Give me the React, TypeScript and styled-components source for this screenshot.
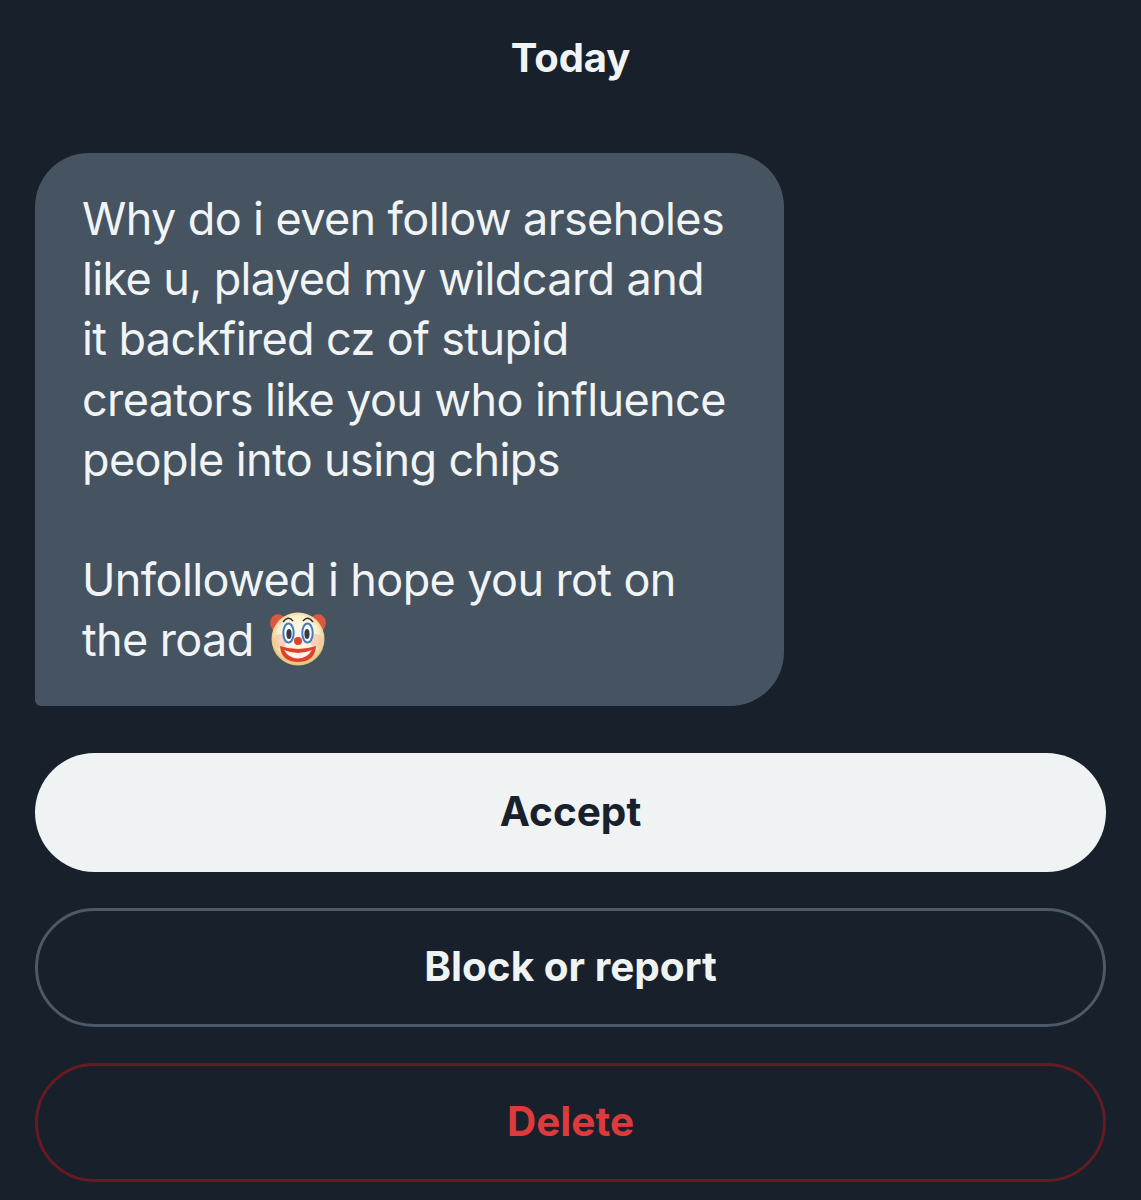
import React from 'react';
import styled, { createGlobalStyle } from 'styled-components';

const GlobalStyle = createGlobalStyle`
  html, body {
    margin: 0;
    padding: 0;
    background: #18202b;
  }
`;

const Screen = styled.div`
  width: 1141px;
  height: 1200px;
  overflow: hidden;
  box-sizing: border-box;
  padding: 0 35px;
  background: #18202b;
  font-family: 'Inter', 'Liberation Sans', sans-serif;
  display: flex;
  flex-direction: column;
`;

const DateLabel = styled.div`
  margin-top: 34px;
  height: 48px;
  line-height: 48px;
  text-align: center;
  color: #f1f4f5;
  font-size: 40px;
  font-weight: 700;
  letter-spacing: -0.1px;
`;

const Bubble = styled.div`
  margin-top: 71px;
  width: 749px;
  height: 553px;
  box-sizing: border-box;
  padding: 36px 47px 0;
  background: #465361;
  border-radius: 54px 54px 54px 6px;
  color: #f1f4f5;
  font-size: 45px;
  line-height: 60.2px;
  letter-spacing: -0.62px;
`;

const Line = styled.div`
  white-space: nowrap;
  min-height: 60.2px;
`;

const Actions = styled.div`
  margin-top: 47px;
  display: flex;
  flex-direction: column;
  gap: 36px;
`;

const Action = styled.button<{ $kind: 'accept' | 'neutral' | 'danger' }>`
  height: 119px;
  box-sizing: border-box;
  border-radius: 60px;
  font-family: inherit;
  font-size: 40.5px;
  font-weight: 700;
  padding: 0 0 2px;
  background: ${p => (p.$kind === 'accept' ? '#eff3f4' : 'transparent')};
  color: ${p => (p.$kind === 'accept' ? '#18202b' : p.$kind === 'danger' ? '#dd3a3d' : '#eff3f4')};
  border: ${p =>
    p.$kind === 'accept' ? 'none' : p.$kind === 'danger' ? '3px solid #661a22' : '3px solid #4c5966'};
`;

const ClownIcon = styled.svg`
  vertical-align: -10px;
  margin-left: 3px;
`;

const Clown = () => (
  <ClownIcon width="58" height="56" viewBox="0 0 58 56">
    <defs>
      <radialGradient id="clownFace" cx="50%" cy="45%" r="52%">
        <stop offset="0%" stopColor="#fffdf2" />
        <stop offset="72%" stopColor="#fdf0d2" />
        <stop offset="100%" stopColor="#e8c67c" />
      </radialGradient>
    </defs>
    <ellipse cx="9" cy="13" rx="8" ry="9" fill="#d9583f" />
    <ellipse cx="49" cy="13" rx="8" ry="9" fill="#d9583f" />
    <circle cx="29" cy="29" r="26.5" fill="url(#clownFace)" />
    <ellipse cx="11" cy="31" rx="6" ry="7" fill="#f6b49a" opacity="0.5" />
    <ellipse cx="47" cy="31" rx="6" ry="7" fill="#f6b49a" opacity="0.5" />
    <path d="M14 12 Q19 5 24 11" fill="none" stroke="#2c2a2a" strokeWidth="1.5" />
    <path d="M34 11 Q39 5 44 12" fill="none" stroke="#2c2a2a" strokeWidth="1.5" />
    <ellipse cx="19.5" cy="23" rx="5.2" ry="9.5" fill="#fff" stroke="#3f7cc0" strokeWidth="2" />
    <ellipse cx="38.5" cy="23" rx="5.2" ry="9.5" fill="#fff" stroke="#3f7cc0" strokeWidth="2" />
    <ellipse cx="20" cy="24" rx="2.6" ry="5" fill="#3a3a44" />
    <ellipse cx="38" cy="24" rx="2.6" ry="5" fill="#3a3a44" />
    <circle cx="29" cy="31" r="4" fill="#e0402f" />
    <path d="M11 36 Q29 42 47 36 Q46 52 29 52 Q12 52 11 36 Z" fill="#e2402c" />
    <path d="M15 40 Q29 46 43 40 Q38 48.5 29 48.5 Q20 48.5 15 40 Z" fill="#fff6e6" />
  </ClownIcon>
);

const App = () => {
  return (
    <Screen>
      <GlobalStyle />
      <DateLabel>Today</DateLabel>
      <Bubble>
        <Line>Why do i even follow arseholes</Line>
        <Line>like u, played my wildcard and</Line>
        <Line>it backfired cz of stupid</Line>
        <Line>creators like you who influence</Line>
        <Line>people into using chips</Line>
        <Line />
        <Line>Unfollowed i hope you rot on</Line>
        <Line>
          the road <Clown />
        </Line>
      </Bubble>
      <Actions>
        <Action $kind='accept'>Accept</Action>
        <Action $kind='neutral'>Block or report</Action>
        <Action $kind='danger'>Delete</Action>
      </Actions>
    </Screen>
  );
};

export default App;
